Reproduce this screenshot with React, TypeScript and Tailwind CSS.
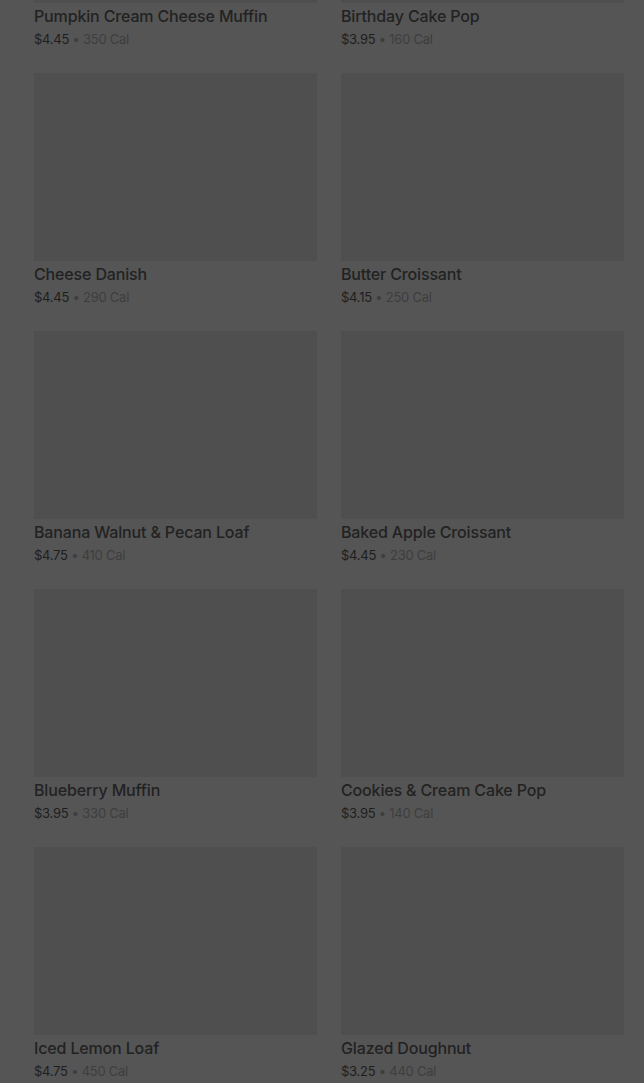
import React from "react";

const items = [
  { name: "Pumpkin Cream Cheese Muffin", price: "$4.45", cal: "350 Cal" },
  { name: "Birthday Cake Pop", price: "$3.95", cal: "160 Cal" },
  { name: "Cheese Danish", price: "$4.45", cal: "290 Cal" },
  { name: "Butter Croissant", price: "$4.15", cal: "250 Cal" },
  { name: "Banana Walnut & Pecan Loaf", price: "$4.75", cal: "410 Cal" },
  { name: "Baked Apple Croissant", price: "$4.45", cal: "230 Cal" },
  { name: "Blueberry Muffin", price: "$3.95", cal: "330 Cal" },
  { name: "Cookies & Cream Cake Pop", price: "$3.95", cal: "140 Cal" },
  { name: "Iced Lemon Loaf", price: "$4.75", cal: "450 Cal" },
  { name: "Glazed Doughnut", price: "$3.25", cal: "440 Cal" },
];

export default function App() {
  return (
    <div
      className="w-[644px] h-[1083px] overflow-hidden bg-[#555555]"
      style={{ fontFamily: "Inter, 'Noto Sans', sans-serif" }}
    >
      <div className="mt-[-185px] grid grid-cols-2 gap-x-6 gap-y-6 pl-[34px] pr-[20px]">
        {items.map((it) => (
          <div key={it.name} className="flex flex-col">
            <div className="h-[188px] bg-[#4f4f4f]" />
            <div className="mt-[1px] text-[16px] leading-6 font-medium text-[#222222] tracking-[-0.15px]">
              {it.name}
            </div>
            <div className="mt-[1px] text-[13px] leading-5 text-[#1e1e1e] tracking-[-0.25px]">
              {it.price}
              <span className="text-[#3e3e3e]"> • {it.cal}</span>
            </div>
          </div>
        ))}
      </div>
    </div>
  );
}
